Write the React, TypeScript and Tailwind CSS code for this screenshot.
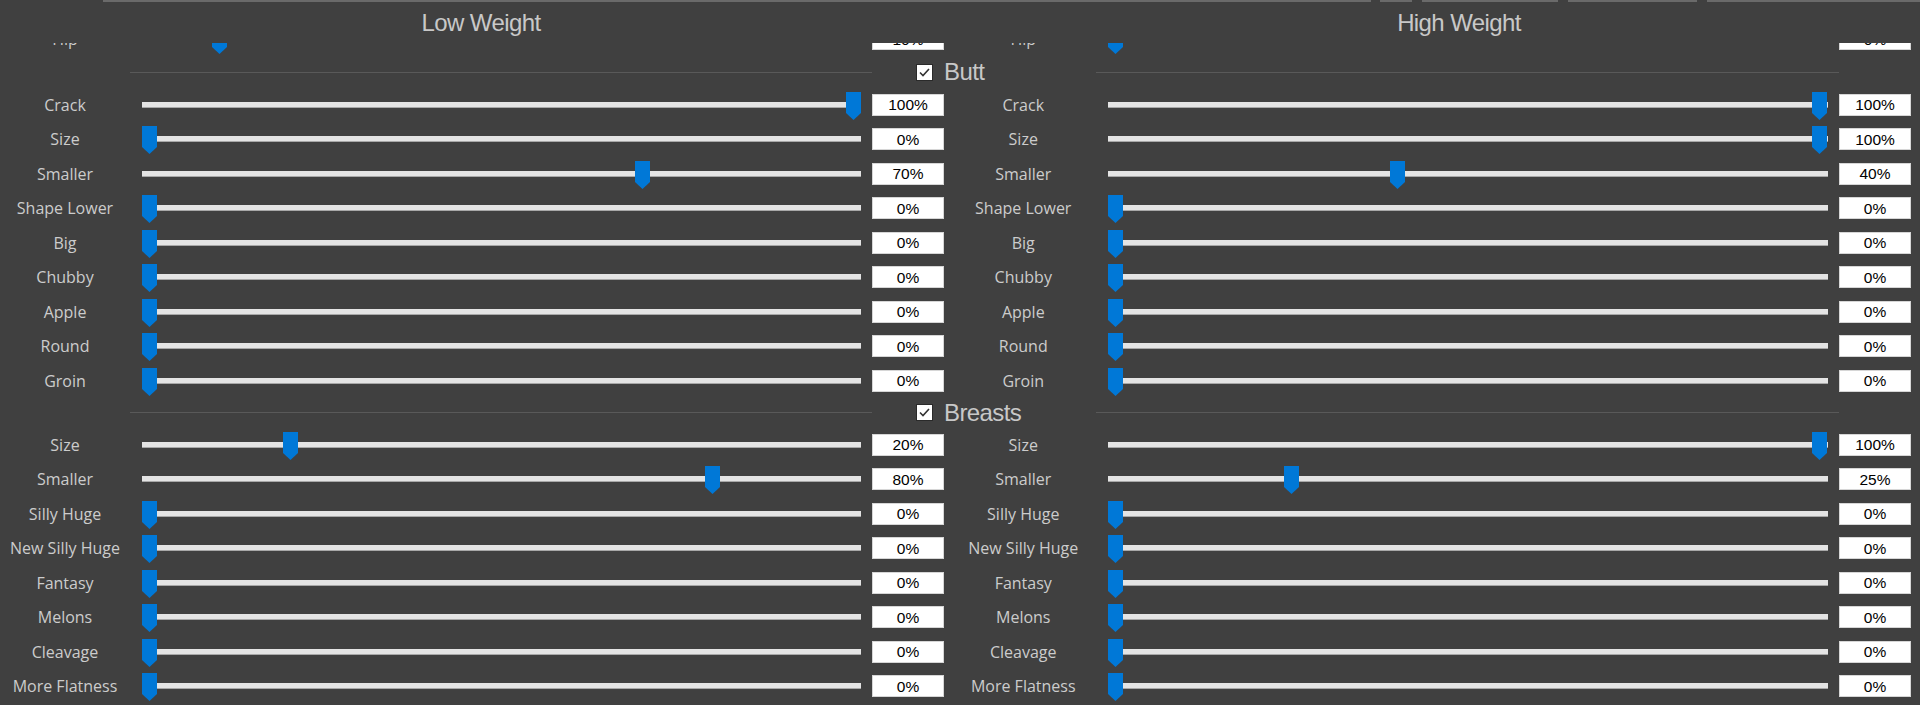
import React from "react";

type Row = { label: string; l: number; r: number };

const hip: Row = { label: "Hip", l: 10, r: 0 };

const butt: Row[] = [
  { label: "Crack", l: 100, r: 100 },
  { label: "Size", l: 0, r: 100 },
  { label: "Smaller", l: 70, r: 40 },
  { label: "Shape Lower", l: 0, r: 0 },
  { label: "Big", l: 0, r: 0 },
  { label: "Chubby", l: 0, r: 0 },
  { label: "Apple", l: 0, r: 0 },
  { label: "Round", l: 0, r: 0 },
  { label: "Groin", l: 0, r: 0 },
];

const breasts: Row[] = [
  { label: "Size", l: 20, r: 100 },
  { label: "Smaller", l: 80, r: 25 },
  { label: "Silly Huge", l: 0, r: 0 },
  { label: "New Silly Huge", l: 0, r: 0 },
  { label: "Fantasy", l: 0, r: 0 },
  { label: "Melons", l: 0, r: 0 },
  { label: "Cleavage", l: 0, r: 0 },
  { label: "More Flatness", l: 0, r: 0 },
];

function Thumb({ value, range }: { value: number; range: number }) {
  return (
    <svg
      className="absolute top-[-10px]"
      style={{ left: (value / 100) * range }}
      width="15"
      height="28"
      viewBox="0 0 15 28"
    >
      <polygon points="0,0 15,0 15,21 7.5,28 0,21" fill="#0078d7" />
    </svg>
  );
}

function SliderLeft({ value }: { value: number }) {
  return (
    <div className="flex h-full w-[742px] shrink-0 items-center pl-[12px] pr-[11px]">
      <div className="relative h-[6px] w-full border-b border-[#a8a8a8] bg-[#e4e4e4]">
        <Thumb value={value} range={704} />
      </div>
    </div>
  );
}

function SliderRight({ value }: { value: number }) {
  return (
    <div className="flex h-full w-[743.5px] shrink-0 items-center pl-[12.5px] pr-[11.5px]">
      <div className="relative h-[6px] w-full border-b border-[#a8a8a8] bg-[#e4e4e4]">
        <Thumb value={value} range={704} />
      </div>
    </div>
  );
}

function ValueBox({ value }: { value: number }) {
  return (
    <div className="flex h-[22px] w-[72px] shrink-0 items-center justify-center border border-[#d6d6d6] bg-white font-['Liberation_Sans',Arial,sans-serif] text-[15.5px] leading-none text-black">
      {value}%
    </div>
  );
}

function SliderRow({ row }: { row: Row }) {
  return (
    <div className="flex h-[34.5px] items-center">
      <div className="w-[130px] shrink-0 text-center font-['Open_Sans',sans-serif] text-[16px] leading-none text-[#cccccc]">
        {row.label}
      </div>
      <SliderLeft value={row.l} />
      <ValueBox value={row.l} />
      <div className="w-[7px] shrink-0" />
      <div className="w-[144.5px] shrink-0 text-center font-['Open_Sans',sans-serif] text-[16px] leading-none text-[#cccccc]">
        {row.label}
      </div>
      <SliderRight value={row.r} />
      <ValueBox value={row.r} />
    </div>
  );
}

function SectionHeader({ title, tall }: { title: string; tall?: boolean }) {
  return (
    <div className={tall ? "flex h-[31px]" : "flex h-[29.5px]"}>
      <div className="w-[130px] shrink-0" />
      <div className="flex w-[742px] shrink-0 items-center">
        <div className="h-px w-full bg-[#595959]" />
      </div>
      <div className="flex w-[223.5px] shrink-0 items-center pl-[44px]">
        <div className="flex h-[17px] w-[17px] shrink-0 items-center justify-center border border-[#2a2a2a] bg-white">
          <svg width="13" height="13" viewBox="0 0 13 13">
            <polyline
              points="2,6.5 5,9.5 11,3"
              fill="none"
              stroke="#333333"
              strokeWidth="1.6"
            />
          </svg>
        </div>
        <span className="ml-[11px] font-['Liberation_Sans',Arial,sans-serif] text-[24px] leading-[24px] tracking-[-0.6px] text-[#c8c8c8]">
          {title}
        </span>
      </div>
      <div className="flex w-[743.5px] shrink-0 items-center">
        <div className="h-px w-full bg-[#595959]" />
      </div>
    </div>
  );
}

export default function App() {
  return (
    <div className="h-[705px] w-[1920px] overflow-hidden bg-[#404040]">
      {/* top edges of tabs/buttons above */}
      <div className="flex h-[2px]">
        <div className="w-[103px] shrink-0" />
        <div className="w-[1268px] shrink-0 bg-[#6a6a6a]" />
        <div className="w-[9px] shrink-0" />
        <div className="w-[32px] shrink-0 bg-[#6a6a6a]" />
        <div className="w-[10px] shrink-0" />
        <div className="w-[136px] shrink-0 bg-[#6a6a6a]" />
        <div className="w-[10px] shrink-0" />
        <div className="w-[129px] shrink-0 bg-[#6a6a6a]" />
        <div className="w-[10px] shrink-0" />
        <div className="w-[213px] shrink-0 bg-[#6a6a6a]" />
      </div>
      {/* titles */}
      <div className="flex h-[41px] pt-[7px] font-['Liberation_Sans',Arial,sans-serif] text-[24px] leading-[28px] tracking-[-0.6px] text-[#c8c8c8]">
        <div className="w-[962px] shrink-0 text-center">Low Weight</div>
        <div className="w-[958px] shrink-0 pl-[36px] text-center">High Weight</div>
      </div>
      {/* scrolled content */}
      <div className="h-[662px] overflow-hidden">
        <div className="mt-[-21px]">
          <SliderRow row={hip} />
          <SectionHeader title="Butt" tall />
          {butt.map((r) => (
            <SliderRow key={"b" + r.label} row={r} />
          ))}
          <SectionHeader title="Breasts" />
          {breasts.map((r) => (
            <SliderRow key={"br" + r.label} row={r} />
          ))}
        </div>
      </div>
    </div>
  );
}
